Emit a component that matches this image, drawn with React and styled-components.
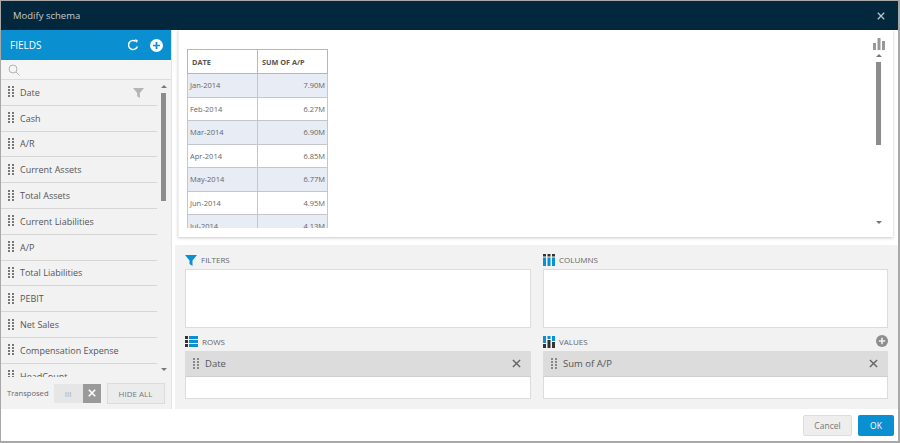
import React from 'react';
import styled, { createGlobalStyle } from 'styled-components';

const Global = createGlobalStyle`
  html, body { margin: 0; padding: 0; background: #fff; }
  * { box-sizing: border-box; }
  body { font-family: "Open Sans", "Liberation Sans", sans-serif; }
`;

const Dialog = styled.div`
  width: 900px; height: 443px; display: flex; flex-direction: column;
  border: 1px solid #a8a8a8; border-width: 1px 2px 2px 1px; background: #fff; overflow: hidden;
`;
const Header = styled.header`
  height: 29px; flex: none; background: #03273c; color: #c3ccd2; font-size: 9.5px;
  display: flex; align-items: center; justify-content: space-between; padding: 0 13px 0 12px;
`;
const CloseBtn = styled.span`display: flex; color: #b9c6ce;`;
const Body = styled.div`flex: none; height: 379px; display: flex; min-height: 0;`;
const Sidebar = styled.aside`
  width: 171px; flex: none; height: 379px; display: flex; flex-direction: column;
  background: #f2f2f2; border-right: 1px solid #e2e2e2;
`;
const FieldsHead = styled.div`
  height: 30px; flex: none; background: #0a8fd1; color: #fff; font-size: 10px;
  display: flex; align-items: center; justify-content: space-between; padding: 0 8px 0 9px;
`;
const HeadIcons = styled.div`display: flex; gap: 11px; align-items: center;`;
const SearchBar = styled.div`
  height: 20px; flex: none; display: flex; align-items: center; padding-left: 7px;
  background: #f5f5f5; border-bottom: 1px solid #dcdcdc; color: #b4b4b4;
`;
const ListWrap = styled.div`position: relative; height: 297px; flex: none; overflow: hidden;`;
const Row = styled.div`
  height: 25.8px; width: 156px; display: flex; align-items: center; gap: 6px; padding-left: 7px;
  border-bottom: 1px solid #d6d6d6; font-size: 9px; color: #555; position: relative;
`;
const Filter = styled.span`position: absolute; right: 13px; top: 7px; display: flex; color: #b5b5b5;`;
const Track = styled.div`position: absolute; left: 160px; top: 5px; width: 5px; bottom: 6px;`;
const Thumb = styled.div`position: absolute; left: 0; top: 8px; width: 5px; height: 108px; background: #8c8c8c;`;
const ArrowUp = styled.div`
  position: absolute; left: 0; top: 0; width: 0; height: 0;
  border: 3px solid transparent; border-top: 0; border-bottom: 3px solid #777;
`;
const ArrowDown = styled.div`
  position: absolute; left: 0; bottom: 0; width: 0; height: 0;
  border: 3px solid transparent; border-bottom: 0; border-top: 3px solid #777;
`;
const SideFoot = styled.div`
  height: 32px; flex: none; display: flex; align-items: center; padding: 0 0 0 6px;
  font-size: 7.6px; color: #666;
`;
const Toggle = styled.div`display: flex; width: 47px; height: 19px; margin-left: 5px; margin-right: 6px;`;
const ToggleOff = styled.div`
  flex: 1; background: #e6e6e6; display: flex; align-items: center; justify-content: center; color: #aaa; font-size: 8px;
`;
const ToggleOn = styled.div`
  width: 18px; background: #9a9a9a; color: #fff; display: flex; align-items: center; justify-content: center;
`;
const HideAll = styled.div`
  width: 58px; height: 21px; border: 1px solid #dcdcdc; background: #ececec; font-size: 8px; color: #777;
  display: flex; align-items: center; justify-content: center;
`;
const Main = styled.main`flex: 1; min-width: 0; display: flex; flex-direction: column; height: 379px;`;
const PreviewOuter = styled.div`height: 215px; flex: none; padding: 0 5px 8px 6px;`;
const Preview = styled.section`
  height: 207px; position: relative; background: #fff; border-left: 1px solid #f0f0f0;
  box-shadow: 0 1px 3px rgba(0,0,0,.22); padding: 19px 0 0 8px; overflow: hidden;
`;
const TableClip = styled.div`width: 141px; height: 179px; overflow: hidden;`;
const Grid = styled.table`
  border-collapse: collapse; width: 140px; table-layout: fixed; font-size: 7.5px; color: #666;
`;
const Th = styled.th`
  height: 24px; border: 1px solid #b4b8bd; text-align: left; padding: 0 4px; font-size: 7.3px; color: #555; font-weight: 700;
`;
const Td = styled.td`
  height: 23.5px; padding: 0 2px; border: 1px solid #c3c7cc; border-width: 0 1px 1px 1px;
  background: ${p => p.$shade ? '#e8ecf4' : '#fff'}; text-align: ${p => p.$right ? 'right' : 'left'};
`;
const ChartIcon = styled.span`position: absolute; right: 8px; top: 8px; display: flex; color: #999;`;
const PTrack = styled.div`position: absolute; right: 12px; top: 24px; height: 170px; width: 5px;`;
const PThumb = styled.div`position: absolute; left: 0; top: 8px; width: 5px; height: 83px; background: #8c8c8c;`;
const Zones = styled.section`
  flex: 1; background: #f2f2f2; margin-left: 3px; padding: 7px 9px 10px 10px;
  display: grid; grid-template-columns: 346px 345px; column-gap: 12px; grid-template-rows: 76px 1fr; row-gap: 6px;
`;
const Zone = styled.div`display: flex; flex-direction: column; position: relative;`;
const ZoneLabel = styled.div`
  height: 17px; display: flex; align-items: center; gap: 4px; font-size: 8px; color: #666; flex: none; padding-bottom: 2px;
`;
const BlueIcon = styled.span`display: flex; color: #0a8fd1;`;
const ZoneBox = styled.div`flex: 1; background: #fff; border: 1px solid #dcdcdc;`;
const Chip = styled.div`
  height: 26px; background: #dcdcdc; display: flex; align-items: center; gap: 6px; padding: 0 10px 0 8px;
  font-size: 9.5px; color: #555; border-bottom: 1px solid #cfcfcf; margin: -1px -1px 0;
`;
const ChipX = styled.span`margin-left: auto; display: flex; color: #666;`;
const AddBtn = styled.span`position: absolute; right: 0; top: 1px; display: flex; color: #8d8d8d;`;
const Footer = styled.footer`
  flex: 1; display: flex; justify-content: flex-end; align-items: center; gap: 6px; padding: 0 4px 0 0; background: #fff;
`;
const Cancel = styled.div`
  width: 49px; height: 21px; background: #eee; border: 1px solid #ddd; border-radius: 2px; font-size: 8.5px; color: #777;
  display: flex; align-items: center; justify-content: center;
`;
const Ok = styled.div`
  width: 36px; height: 21px; background: #0a8fd1; border-radius: 2px; font-size: 8.5px; color: #fff;
  display: flex; align-items: center; justify-content: center;
`;

const Grip = ({ color = '#777' }) => (
  <svg width="6" height="12" viewBox="0 0 6 12" style={{ flex: 'none' }} shapeRendering="crispEdges">
    {[0, 3, 6, 9].flatMap(y => [0, 4].map(x => (
      <rect key={`${x}-${y}`} x={x} y={y} width="2" height="2" fill={color} />
    )))}
  </svg>
);
const X = ({ s = 9, w = 1.6 }) => (
  <svg width={s} height={s} viewBox="0 0 10 10" stroke="currentColor" strokeWidth={w} fill="none">
    <path d="M1 1l8 8M9 1l-8 8" />
  </svg>
);
const Funnel = ({ s = 11 }) => (
  <svg width={s} height={s} viewBox="0 0 12 12" fill="currentColor"><path d="M0 1h12L7.5 6.5V12l-3-2V6.5z" /></svg>
);
const Plus = ({ s = 13, fg = '#0a8fd1', bg = '#fff' }) => (
  <svg width={s} height={s} viewBox="0 0 12 12"><circle cx="6" cy="6" r="6" fill={bg} /><path d="M6 2.8v6.4M2.8 6h6.4" stroke={fg} strokeWidth="1.6" /></svg>
);
const Refresh = () => (
  <svg width="12" height="12" viewBox="0 0 12 12" fill="none" stroke="#fff" strokeWidth="1.5">
    <path d="M10.3 7.5A4.5 4.5 0 1 1 8.7 2.4" />
    <path d="M7.8 0.3l3 .7-.9 3z" fill="#fff" stroke="none" />
  </svg>
);
const RowsIcon = () => (
  <svg width="13" height="11" viewBox="0 0 13 11">
    {[0, 4, 8].map(y => <g key={y}><rect y={y} width="3" height="3" fill="#333" /><rect x="4" y={y} width="9" height="3" fill="#0a8fd1" /></g>)}
  </svg>
);
const ColsIcon = () => (
  <svg width="12" height="12" viewBox="0 0 12 12">
    {[0, 4.5, 9].map(x => <g key={x}><rect x={x} width="3" height="2.5" fill="#333" /><rect x={x} y="3.5" width="3" height="8.5" fill="#0a8fd1" /></g>)}
  </svg>
);
const ValuesIcon = () => (
  <svg width="12" height="12" viewBox="0 0 12 12">
    <rect width="3" height="7" fill="#0a8fd1" /><rect y="8" width="3" height="4" fill="#333" />
    <rect x="4.5" width="3" height="3" fill="#0a8fd1" /><rect x="4.5" y="4" width="3" height="8" fill="#333" />
    <rect x="9" width="3" height="5" fill="#0a8fd1" /><rect x="9" y="6" width="3" height="6" fill="#333" />
  </svg>
);
const Search = () => (
  <svg width="12" height="12" viewBox="0 0 12 12" fill="none" stroke="currentColor" strokeWidth="1">
    <circle cx="5" cy="5" r="4" /><path d="M8 8l3.5 3.5" />
  </svg>
);
const Bars = () => (
  <svg width="12" height="12" viewBox="0 0 12 12" fill="currentColor">
    <rect y="5" width="3" height="7" /><rect x="4.5" width="3" height="12" /><rect x="9" y="3" width="3" height="9" />
  </svg>
);

const fields = ['Date', 'Cash', 'A/R', 'Current Assets', 'Total Assets', 'Current Liabilities', 'A/P', 'Total Liabilities', 'PEBIT', 'Net Sales', 'Compensation Expense', 'HeadCount'];
const rows = [['Jan-2014', '7.90M'], ['Feb-2014', '6.27M'], ['Mar-2014', '6.90M'], ['Apr-2014', '6.85M'], ['May-2014', '6.77M'], ['Jun-2014', '4.95M'], ['Jul-2014', '4.13M']];

export default function App() {
  return (
    <Dialog>
      <Global />
      <Header>
        <span>Modify schema</span>
        <CloseBtn><X s={8} /></CloseBtn>
      </Header>
      <Body>
        <Sidebar>
          <FieldsHead>
            <span>FIELDS</span>
            <HeadIcons><Refresh /><Plus /></HeadIcons>
          </FieldsHead>
          <SearchBar><Search /></SearchBar>
          <ListWrap>
            {fields.map((f, i) => (
              <Row key={f}>
                <Grip />
                {f}
                {i === 0 && <Filter><Funnel /></Filter>}
              </Row>
            ))}
            <Track><ArrowUp /><Thumb /><ArrowDown /></Track>
          </ListWrap>
          <SideFoot>
            Transposed
            <Toggle>
              <ToggleOff>III</ToggleOff>
              <ToggleOn><X s={8} w={2} /></ToggleOn>
            </Toggle>
            <HideAll>HIDE ALL</HideAll>
          </SideFoot>
        </Sidebar>
        <Main>
          <PreviewOuter>
            <Preview>
              <TableClip>
                <Grid>
                  <colgroup><col style={{ width: 70 }} /><col style={{ width: 70 }} /></colgroup>
                  <thead><tr><Th>DATE</Th><Th>SUM OF A/P</Th></tr></thead>
                  <tbody>
                    {rows.map(([d, v], i) => (
                      <tr key={d}><Td $shade={i % 2 === 0}>{d}</Td><Td $shade={i % 2 === 0} $right>{v}</Td></tr>
                    ))}
                  </tbody>
                </Grid>
              </TableClip>
              <ChartIcon><Bars /></ChartIcon>
              <PTrack><ArrowUp /><PThumb /><ArrowDown /></PTrack>
            </Preview>
          </PreviewOuter>
          <Zones>
            <Zone>
              <ZoneLabel><BlueIcon><Funnel s={12} /></BlueIcon>FILTERS</ZoneLabel>
              <ZoneBox />
            </Zone>
            <Zone>
              <ZoneLabel><ColsIcon />COLUMNS</ZoneLabel>
              <ZoneBox />
            </Zone>
            <Zone>
              <ZoneLabel><RowsIcon />ROWS</ZoneLabel>
              <ZoneBox>
                <Chip><Grip color="#888" />Date<ChipX><X /></ChipX></Chip>
              </ZoneBox>
            </Zone>
            <Zone>
              <ZoneLabel><ValuesIcon />VALUES</ZoneLabel>
              <AddBtn><Plus s={12} fg="#f2f2f2" bg="#8d8d8d" /></AddBtn>
              <ZoneBox>
                <Chip><Grip color="#888" />Sum of A/P<ChipX><X /></ChipX></Chip>
              </ZoneBox>
            </Zone>
          </Zones>
        </Main>
      </Body>
      <Footer>
        <Cancel>Cancel</Cancel>
        <Ok>OK</Ok>
      </Footer>
    </Dialog>
  );
}
